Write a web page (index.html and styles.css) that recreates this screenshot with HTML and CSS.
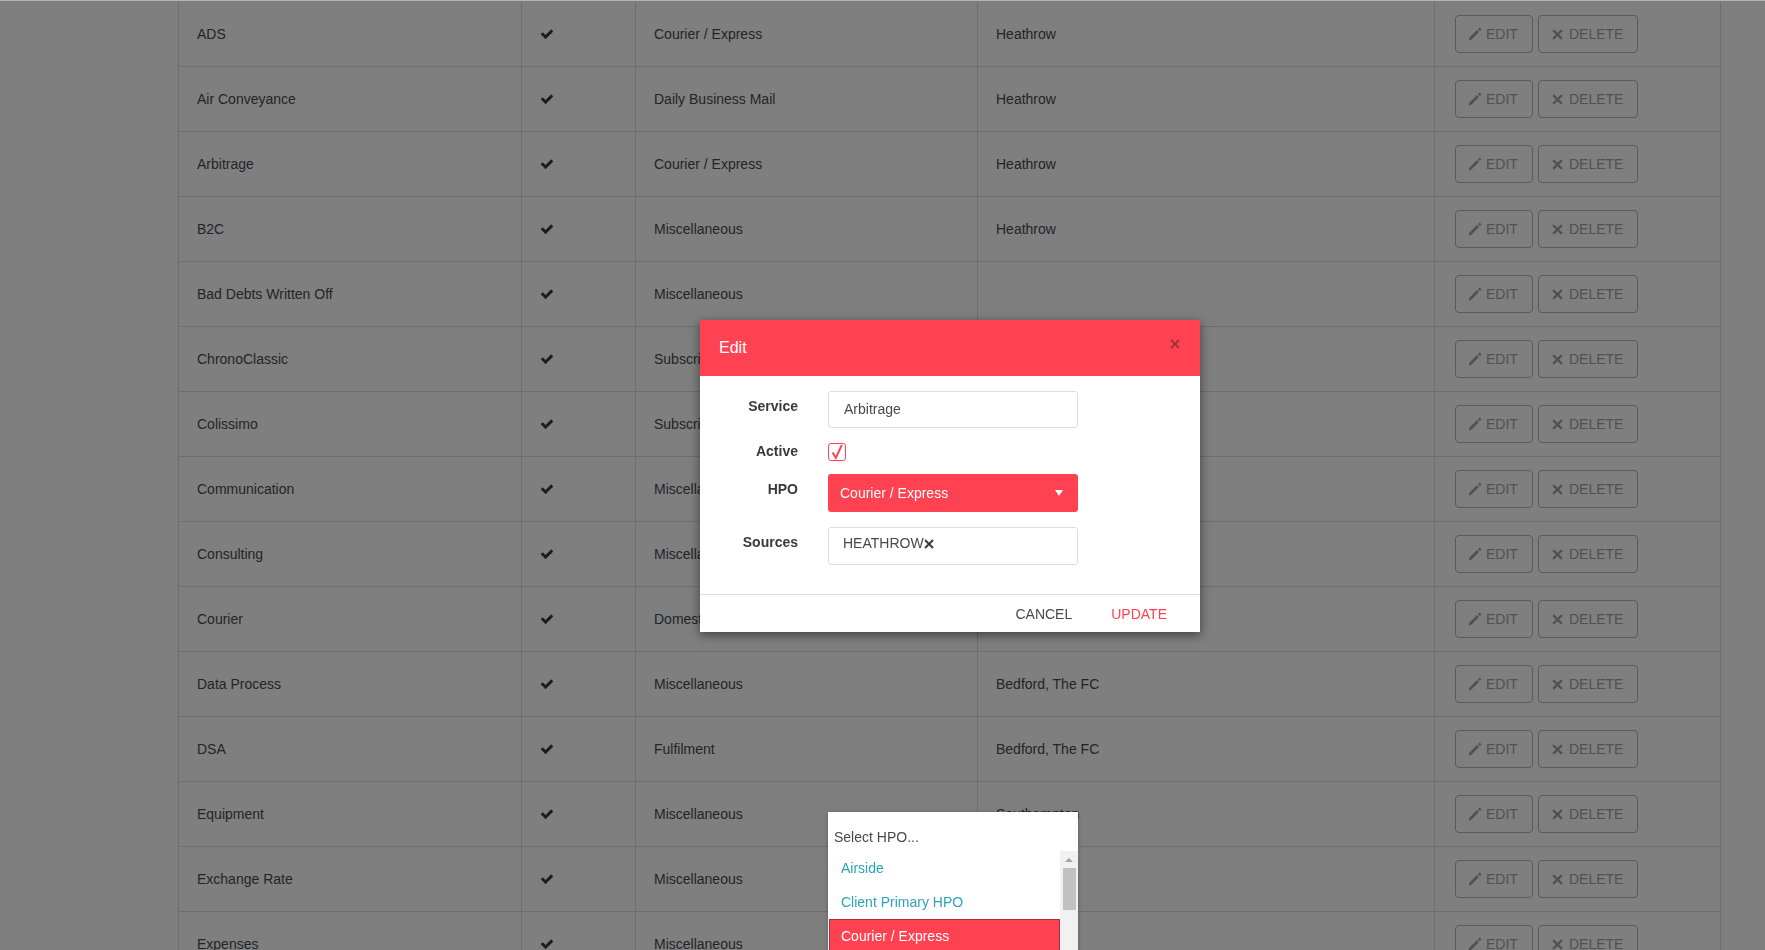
FILE: index.html
```html
<!DOCTYPE html>
<html>
<head>
  <meta charset="utf-8">
  <title>Services</title>
  <link rel="stylesheet" href="styles.css">
</head>
<body>
  <svg class="icon-defs" xmlns="http://www.w3.org/2000/svg">
    <symbol id="i-check" viewBox="0 0 1792 1792">
      <path d="M1671 566q0 40-28 68l-724 724-136 136q-28 28-68 28t-68-28l-136-136-362-362q-28-28-28-68t28-68l136-136q28-28 68-28t68 28l294 295 656-657q28-28 68-28t68 28l136 136q28 28 28 68z"/>
    </symbol>
    <symbol id="i-edit" viewBox="0 0 14 14">
      <path d="M.8 13.4l.5-2.6 7.7-7.7 2 2-7.7 7.7z"/>
      <path d="M10 2.2l1.2-1.2c.3-.3.7-.3 1 0l.9.9c.3.3.3.7 0 1l-1.2 1.2z"/>
    </symbol>
    <symbol id="i-close" viewBox="0 0 10 10">
      <path d="M1 1l8 8M9 1l-8 8" fill="none" stroke="currentColor" stroke-width="2"/>
    </symbol>
  </svg>

  <table class="services">
    <colgroup>
      <col class="col-name"><col class="col-active"><col class="col-hpo"><col class="col-sources"><col class="col-actions">
    </colgroup>
    <tbody>
      <tr><td>ADS</td><td><svg class="check"><use href="#i-check"/></svg></td><td>Courier / Express</td><td>Heathrow</td>
        <td class="actions"><button class="btn btn-edit"><svg class="ico-edit"><use href="#i-edit"/></svg>EDIT</button><button class="btn btn-delete"><svg class="ico-close"><use href="#i-close"/></svg>DELETE</button></td></tr>
      <tr><td>Air Conveyance</td><td><svg class="check"><use href="#i-check"/></svg></td><td>Daily Business Mail</td><td>Heathrow</td>
        <td class="actions"><button class="btn btn-edit"><svg class="ico-edit"><use href="#i-edit"/></svg>EDIT</button><button class="btn btn-delete"><svg class="ico-close"><use href="#i-close"/></svg>DELETE</button></td></tr>
      <tr><td>Arbitrage</td><td><svg class="check"><use href="#i-check"/></svg></td><td>Courier / Express</td><td>Heathrow</td>
        <td class="actions"><button class="btn btn-edit"><svg class="ico-edit"><use href="#i-edit"/></svg>EDIT</button><button class="btn btn-delete"><svg class="ico-close"><use href="#i-close"/></svg>DELETE</button></td></tr>
      <tr><td>B2C</td><td><svg class="check"><use href="#i-check"/></svg></td><td>Miscellaneous</td><td>Heathrow</td>
        <td class="actions"><button class="btn btn-edit"><svg class="ico-edit"><use href="#i-edit"/></svg>EDIT</button><button class="btn btn-delete"><svg class="ico-close"><use href="#i-close"/></svg>DELETE</button></td></tr>
      <tr><td>Bad Debts Written Off</td><td><svg class="check"><use href="#i-check"/></svg></td><td>Miscellaneous</td><td></td>
        <td class="actions"><button class="btn btn-edit"><svg class="ico-edit"><use href="#i-edit"/></svg>EDIT</button><button class="btn btn-delete"><svg class="ico-close"><use href="#i-close"/></svg>DELETE</button></td></tr>
      <tr><td>ChronoClassic</td><td><svg class="check"><use href="#i-check"/></svg></td><td>Subscription</td><td></td>
        <td class="actions"><button class="btn btn-edit"><svg class="ico-edit"><use href="#i-edit"/></svg>EDIT</button><button class="btn btn-delete"><svg class="ico-close"><use href="#i-close"/></svg>DELETE</button></td></tr>
      <tr><td>Colissimo</td><td><svg class="check"><use href="#i-check"/></svg></td><td>Subscription</td><td></td>
        <td class="actions"><button class="btn btn-edit"><svg class="ico-edit"><use href="#i-edit"/></svg>EDIT</button><button class="btn btn-delete"><svg class="ico-close"><use href="#i-close"/></svg>DELETE</button></td></tr>
      <tr><td>Communication</td><td><svg class="check"><use href="#i-check"/></svg></td><td>Miscellaneous</td><td></td>
        <td class="actions"><button class="btn btn-edit"><svg class="ico-edit"><use href="#i-edit"/></svg>EDIT</button><button class="btn btn-delete"><svg class="ico-close"><use href="#i-close"/></svg>DELETE</button></td></tr>
      <tr><td>Consulting</td><td><svg class="check"><use href="#i-check"/></svg></td><td>Miscellaneous</td><td></td>
        <td class="actions"><button class="btn btn-edit"><svg class="ico-edit"><use href="#i-edit"/></svg>EDIT</button><button class="btn btn-delete"><svg class="ico-close"><use href="#i-close"/></svg>DELETE</button></td></tr>
      <tr><td>Courier</td><td><svg class="check"><use href="#i-check"/></svg></td><td>Domestic</td><td></td>
        <td class="actions"><button class="btn btn-edit"><svg class="ico-edit"><use href="#i-edit"/></svg>EDIT</button><button class="btn btn-delete"><svg class="ico-close"><use href="#i-close"/></svg>DELETE</button></td></tr>
      <tr><td>Data Process</td><td><svg class="check"><use href="#i-check"/></svg></td><td>Miscellaneous</td><td>Bedford, The FC</td>
        <td class="actions"><button class="btn btn-edit"><svg class="ico-edit"><use href="#i-edit"/></svg>EDIT</button><button class="btn btn-delete"><svg class="ico-close"><use href="#i-close"/></svg>DELETE</button></td></tr>
      <tr><td>DSA</td><td><svg class="check"><use href="#i-check"/></svg></td><td>Fulfilment</td><td>Bedford, The FC</td>
        <td class="actions"><button class="btn btn-edit"><svg class="ico-edit"><use href="#i-edit"/></svg>EDIT</button><button class="btn btn-delete"><svg class="ico-close"><use href="#i-close"/></svg>DELETE</button></td></tr>
      <tr><td>Equipment</td><td><svg class="check"><use href="#i-check"/></svg></td><td>Miscellaneous</td><td>Southampton</td>
        <td class="actions"><button class="btn btn-edit"><svg class="ico-edit"><use href="#i-edit"/></svg>EDIT</button><button class="btn btn-delete"><svg class="ico-close"><use href="#i-close"/></svg>DELETE</button></td></tr>
      <tr><td>Exchange Rate</td><td><svg class="check"><use href="#i-check"/></svg></td><td>Miscellaneous</td><td></td>
        <td class="actions"><button class="btn btn-edit"><svg class="ico-edit"><use href="#i-edit"/></svg>EDIT</button><button class="btn btn-delete"><svg class="ico-close"><use href="#i-close"/></svg>DELETE</button></td></tr>
      <tr><td>Expenses</td><td><svg class="check"><use href="#i-check"/></svg></td><td>Miscellaneous</td><td></td>
        <td class="actions"><button class="btn btn-edit"><svg class="ico-edit"><use href="#i-edit"/></svg>EDIT</button><button class="btn btn-delete"><svg class="ico-close"><use href="#i-close"/></svg>DELETE</button></td></tr>
    </tbody>
  </table>

  <div class="overlay"></div>

  <div class="modal">
    <div class="modal-header">
      <span class="modal-title">Edit</span>
      <svg class="modal-close"><use href="#i-close"/></svg>
    </div>
    <form class="modal-form">
      <label class="form-label">Service</label>
      <input class="form-input" type="text" value="Arbitrage">
      <label class="form-label label-active">Active</label>
      <span class="form-check">
        <svg viewBox="0 0 16 16"><path d="M3.6 8.6l3.2 5.2L12.8 1" fill="none" stroke="#ff4252" stroke-width="2"/></svg>
      </span>
      <label class="form-label">HPO</label>
      <div class="form-select"><span>Courier / Express</span><i class="select-arrow"></i></div>
      <label class="form-label">Sources</label>
      <div class="form-tags">HEATHROW<svg class="tag-close"><use href="#i-close"/></svg></div>
    </form>
    <div class="modal-footer">
      <button class="link-btn" type="button">CANCEL</button>
      <button class="link-btn link-primary" type="button">UPDATE</button>
    </div>
  </div>

  <div class="dropdown">
    <div class="dropdown-filter">Select HPO...</div>
    <div class="dropdown-body">
      <ul class="dropdown-list">
        <li>Airside</li>
        <li>Client Primary HPO</li>
        <li class="selected">Courier / Express</li>
      </ul>
      <div class="scrollbar">
        <i class="scroll-up"></i>
        <div class="scroll-thumb"></div>
      </div>
    </div>
  </div>
</body>
</html>
```

FILE: styles.css
```css
html, body {
  height: 100%;
  overflow: hidden;
}

body {
  margin: 0;
  padding: 1px 0 0 178px;
  box-sizing: border-box;
  border-top: 1px solid #b4b4b4;
  background: #fff;
  font-family: "Liberation Sans", Arial, sans-serif;
  font-size: 14px;
  line-height: 20px;
  color: #454a50;
}

.icon-defs {
  display: none;
}

/* table */
.services {
  width: 1543px;
  table-layout: fixed;
  border-collapse: separate;
  border-spacing: 0;
}

.col-name { width: 344px; }
.col-active { width: 114px; }
.col-hpo { width: 342px; }
.col-sources { width: 457px; }
.col-actions { width: 286px; }

.services td {
  box-sizing: border-box;
  height: 65px;
  padding: 0 18px;
  border-right: 1px solid #ddd;
  border-bottom: 1px solid #ddd;
}

.services td:first-child {
  border-left: 1px solid #ddd;
}

.services td.actions {
  padding: 0 0 0 20px;
}

.check {
  display: block;
  width: 14px;
  height: 14px;
  fill: #373a3c;
}

.btn {
  display: inline-flex;
  align-items: center;
  box-sizing: border-box;
  height: 38px;
  margin: 0 5px 0 0;
  vertical-align: middle;
  background: #fff;
  border: 1px solid #b4b4b4;
  border-radius: 4px;
  font-family: inherit;
  font-size: 14px;
  color: #a2a2a2;
}

.btn-edit {
  width: 78px;
  padding: 0 0 0 12px;
}

.btn-delete {
  width: 100px;
  padding: 0 0 0 13px;
}

.ico-edit {
  width: 14px;
  height: 14px;
  margin-right: 4px;
  fill: #a2a2a2;
}

.ico-close {
  width: 11px;
  height: 11px;
  margin-right: 6px;
  color: #a2a2a2;
}

/* modal */
.overlay {
  position: fixed;
  top: 1px;
  left: 0;
  right: 0;
  bottom: 0;
  background: rgba(0, 0, 0, 0.5);
}

.modal {
  position: absolute;
  top: 320px;
  left: 700px;
  width: 500px;
  background: #fff;
  box-shadow: 0 3px 10px rgba(0, 0, 0, 0.5);
}

.modal-header {
  display: flex;
  justify-content: space-between;
  align-items: flex-start;
  box-sizing: border-box;
  height: 56px;
  padding: 17px 20px 0 19px;
  background: #ff4252;
}

.modal-title {
  padding-top: 1px;
  font-size: 16px;
  color: #fff;
}

.modal-close {
  width: 10px;
  height: 10px;
  margin-top: 2px;
  color: #a5303b;
}

.modal-form {
  display: grid;
  grid-template-columns: 98px 250px;
  column-gap: 30px;
  row-gap: 15px;
  align-items: start;
  padding: 15px 0 29px;
}

.form-label {
  padding-top: 5px;
  text-align: right;
  font-weight: bold;
  color: #373a3c;
}

.label-active {
  padding-top: 0;
  margin: -2px 0 -2px;
}

.form-input {
  box-sizing: border-box;
  width: 250px;
  height: 37px;
  padding: 0 15px 2px;
  border: 1px solid #ddd;
  border-radius: 3px;
  font-family: inherit;
  font-size: 14px;
  color: #454a50;
}

.form-check {
  display: block;
  box-sizing: border-box;
  width: 18px;
  height: 18px;
  margin-bottom: -2px;
  border: 1px solid #ff4252;
  border-radius: 3px;
}

.form-check svg {
  display: block;
  width: 16px;
  height: 16px;
}

.form-select {
  display: flex;
  justify-content: space-between;
  align-items: center;
  box-sizing: border-box;
  height: 38px;
  padding: 0 15px 0 12px;
  background: #ff4252;
  border-radius: 3px;
  color: #fff;
}

.select-arrow {
  width: 0;
  height: 0;
  border-left: 4px solid transparent;
  border-right: 4px solid transparent;
  border-top: 6px solid #fff;
}

.form-tags {
  display: flex;
  align-items: center;
  box-sizing: border-box;
  height: 38px;
  padding: 0 15px 7px 14px;
  border: 1px solid #ddd;
  border-radius: 3px;
}

.tag-close {
  width: 10px;
  height: 10px;
  margin-top: 2px;
  color: #373a3c;
}

.modal-footer {
  display: flex;
  justify-content: flex-end;
  align-items: center;
  gap: 39px;
  box-sizing: border-box;
  height: 38px;
  padding-right: 33px;
  border-top: 1px solid #ddd;
}

.link-btn {
  padding: 0;
  border: none;
  background: none;
  font-family: inherit;
  font-size: 14px;
  color: #454a50;
}

.link-primary {
  color: #ff4252;
}

/* dropdown */
.dropdown {
  position: absolute;
  top: 812px;
  left: 828px;
  width: 250px;
  background: #fff;
  box-shadow: 0 1px 4px rgba(0, 0, 0, 0.3);
}

.dropdown-filter {
  box-sizing: border-box;
  height: 39px;
  padding: 15px 0 0 6px;
}

.dropdown-body {
  display: flex;
}

.dropdown-list {
  flex: 1;
  margin: 0;
  padding: 0;
  list-style: none;
}

.dropdown-list li {
  box-sizing: border-box;
  height: 34px;
  padding: 7px 0 0 13px;
  color: #2ea3b7;
}

.dropdown-list .selected {
  margin-left: 1px;
  padding: 6px 0 0 11px;
  background: #ff4252;
  border: 1px solid #a5303b;
  color: #fff;
}

.scrollbar {
  display: flex;
  flex-direction: column;
  align-items: center;
  width: 18px;
  background: #f1f1f1;
}

.scroll-up {
  width: 0;
  height: 0;
  margin-top: 7px;
  border-left: 4px solid transparent;
  border-right: 4px solid transparent;
  border-bottom: 4px solid #a3a3a3;
}

.scroll-thumb {
  width: 13px;
  height: 42px;
  margin-top: 6px;
  background: #c1c1c1;
}
```
